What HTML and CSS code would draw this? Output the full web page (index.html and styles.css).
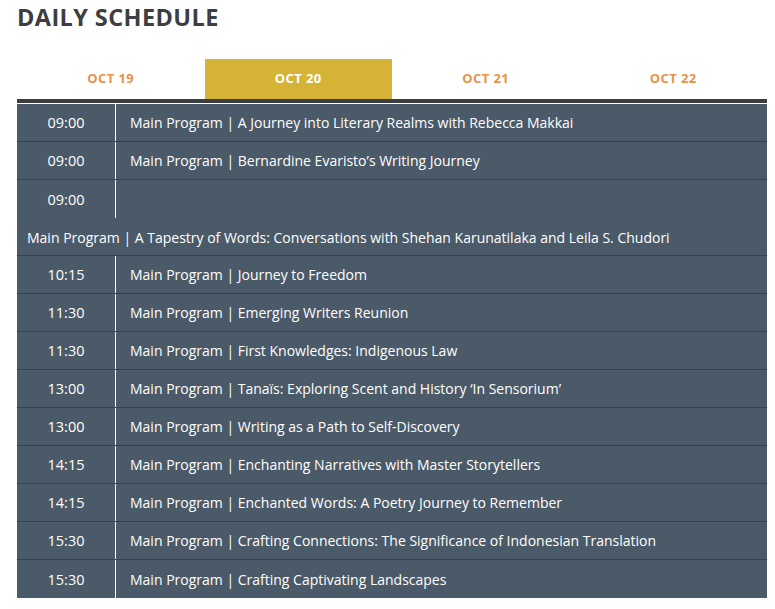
FILE: index.html
```html
<!DOCTYPE html>
<html>
<head>
<meta charset="utf-8">
<link rel="stylesheet" href="styles.css">
</head>
<body>
<div class="page">
  <h1 class="title">DAILY SCHEDULE</h1>
  <div class="tabs">
    <div class="tab">OCT 19</div>
    <div class="tab active">OCT 20</div>
    <div class="tab">OCT 21</div>
    <div class="tab">OCT 22</div>
  </div>
  <div class="bar"></div>
  <div class="schedule">
    <div class="row"><div class="time">09:00</div><div class="event">Main Program | A Journey into Literary Realms with Rebecca Makkai</div></div>
    <div class="row"><div class="time">09:00</div><div class="event">Main Program | Bernardine Evaristo’s Writing Journey</div></div>
    <div class="row wrap"><div class="time">09:00</div><div class="event"></div><div class="event full">Main Program | A Tapestry of Words: Conversations with Shehan Karunatilaka and Leila S. Chudori</div></div>
    <div class="row"><div class="time">10:15</div><div class="event">Main Program | Journey to Freedom</div></div>
    <div class="row"><div class="time">11:30</div><div class="event">Main Program | Emerging Writers Reunion</div></div>
    <div class="row"><div class="time">11:30</div><div class="event">Main Program | First Knowledges: Indigenous Law</div></div>
    <div class="row"><div class="time">13:00</div><div class="event">Main Program | Tanaïs: Exploring Scent and History ‘In Sensorium’</div></div>
    <div class="row"><div class="time">13:00</div><div class="event">Main Program | Writing as a Path to Self-Discovery</div></div>
    <div class="row"><div class="time">14:15</div><div class="event">Main Program | Enchanting Narratives with Master Storytellers</div></div>
    <div class="row"><div class="time">14:15</div><div class="event">Main Program | Enchanted Words: A Poetry Journey to Remember</div></div>
    <div class="row"><div class="time">15:30</div><div class="event">Main Program | Crafting Connections: The Significance of Indonesian Translation</div></div>
    <div class="row"><div class="time">15:30</div><div class="event">Main Program | Crafting Captivating Landscapes</div></div>
  </div>
</div>
</body>
</html>
```

FILE: styles.css
```css
* { box-sizing: border-box; }
html, body { margin: 0; padding: 0; background: #ffffff; }
.page {
  width: 750px;
  margin-left: 17px;
  font-family: "Open Sans", "Liberation Sans", sans-serif;
}
.title {
  margin: 0;
  padding-top: 3px;
  height: 59px;
  font-family: "Open Sans", sans-serif;
  font-weight: 700;
  font-size: 23.5px;
  letter-spacing: 0.4px;
  line-height: 28px;
  color: #3c3e40;
}
.tabs {
  display: grid;
  grid-template-columns: repeat(4, 1fr);
  height: 40px;
}
.tab {
  display: flex;
  align-items: center;
  justify-content: center;
  padding-bottom: 3px;
  font-family: "Open Sans", sans-serif;
  font-weight: 700;
  font-size: 13px;
  letter-spacing: 0.4px;
  color: #e8924a;
}
.tab.active {
  background: #d5b337;
  color: #ffffff;
}
.bar {
  height: 4px;
  background: #3b3d40;
  margin-bottom: 1px;
}
.schedule {
  background: #4b5a68;
}
.row {
  display: grid;
  grid-template-columns: 99px 1fr;
  height: 38px;
  border-bottom: 1px solid #36404a;
  color: #ffffff;
  font-size: 14px;
}
.row:last-child { border-bottom: 0; }
.row.wrap { height: 76px; grid-template-rows: 38px 38px; }
.time {
  display: flex;
  align-items: center;
  justify-content: center;
  border-right: 1px solid #ffffff;
  font-size: 14.5px;
}
.event {
  display: flex;
  align-items: center;
  padding-left: 14px;
}
.event.full {
  grid-column: 1 / 3;
  padding-left: 10px;
}
```
